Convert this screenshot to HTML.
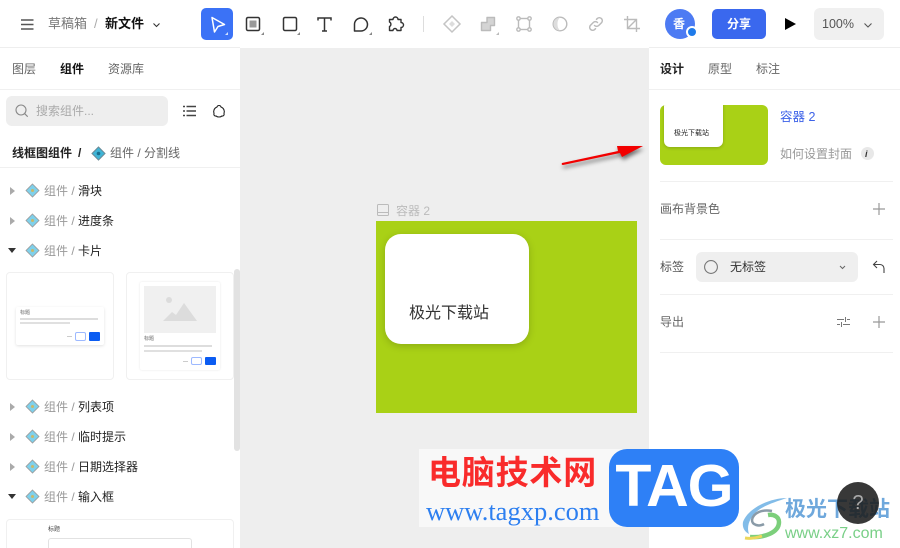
<!DOCTYPE html>
<html lang="zh"><head><meta charset="utf-8"><style>
html,body{margin:0;padding:0;background:#fff}
#p{position:relative;width:900px;height:548px;overflow:hidden;background:#fff;font-family:"Liberation Sans","Noto Sans CJK SC",sans-serif;color:#333}
#p div,#p span.a,#p svg{position:absolute}
.t{position:absolute;white-space:nowrap;line-height:16px}
.tree{font-size:12px;color:#999;left:44px}
.tree b{font-weight:400;color:#222}
.line{height:1px;background:#f0f0f0}
svg{overflow:visible}
</style></head><body><div id="p">
<!-- canvas -->
<div style="left:240px;top:48px;width:409px;height:500px;background:#eee"></div>
<div class="line" style="left:0;top:47px;width:240px;background:#eee"></div>
<div class="line" style="left:649px;top:47px;width:251px;background:#eee"></div>
<!-- top bar -->
<svg style="left:21px;top:18.500px" width="13" height="11" fill="none" stroke="#555" stroke-width="1.600"><path d="M0 1h12.500M0 5.500h12.500M0 10h12.500"/></svg>
<div class="t" style="left:48px;top:16px;font-size:13px;color:#777">草稿箱</div>
<div class="t" style="left:94px;top:16px;font-size:13px;color:#aaa">/</div>
<div class="t" style="left:105px;top:16px;font-size:13px;font-weight:700;color:#111">新文件</div>
<svg style="left:153px;top:23px" width="7" height="5" fill="none" stroke="#333" stroke-width="1.100"><path d="M.5 .5l3 3 3-3"/></svg>
<div style="left:201px;top:8px;width:32px;height:32px;border-radius:5px;background:#3b72f6"></div>
<svg style="left:201px;top:8px" width="32" height="32" fill="none"><path d="M11 9.500L23.500 16.500 17 18.500 13.500 24Z" stroke="#fff" stroke-width="1.500" stroke-linejoin="round"/><path d="M27 24v3h-3z" fill="#cfe0ff"/></svg>
<svg style="left:245px;top:16px" width="20" height="20" fill="none"><rect x="1.500" y="1.500" width="13" height="13" rx="1.500" stroke="#333" stroke-width="1.500"/><rect x="4.500" y="4.500" width="7" height="7" fill="#999"/><path d="M19 16v3h-3z" fill="#888"/></svg>
<svg style="left:281px;top:16px" width="20" height="20" fill="none"><rect x="2.500" y="1.500" width="13" height="13" rx="1.500" stroke="#333" stroke-width="1.500"/><path d="M19 16v3h-3z" fill="#888"/></svg>
<svg style="left:317px;top:17px" width="16" height="15" fill="none" stroke="#333" stroke-width="1.500"><path d="M1 3.500V1h13v2.500M7.500 1v13M5 14h5"/></svg>
<svg style="left:353px;top:16px" width="20" height="20" fill="none"><path d="M1.500 15V8a6.500 6.500 0 1 1 6.500 7Z" stroke="#333" stroke-width="1.500" stroke-linejoin="round"/><path d="M19 16v3h-3z" fill="#888"/></svg>
<svg style="left:388px;top:16px" width="16" height="16" fill="none"><path d="M5 3.500a2.500 2.500 0 0 1 5 0H13v3a2.500 2.500 0 0 1 0 5V14.500H9a2 2 0 0 0-4 0H1.500V10.500a2.500 2.500 0 0 0 0-4.500V3.500Z" stroke="#333" stroke-width="1.400" stroke-linejoin="round"/></svg>
<div style="left:423px;top:16px;width:1px;height:16px;background:#ddd"></div>
<svg style="left:443px;top:15px" width="18" height="18" fill="none" stroke="#c4c4c4" stroke-width="1.500"><path d="M9 1l8 8-8 8-8-8z"/><path d="M9 6l3 3-3 3-3-3z" fill="#ddd" stroke="none"/></svg>
<svg style="left:480px;top:16px" width="20" height="20" fill="#d4d4d4" stroke="#bbb" stroke-width="1.400"><path d="M7 1.500h7.500v8h-4v5H1.500V6.500H7z" stroke-linejoin="round"/><path d="M19 16v3h-3z" fill="#bbb" stroke="none"/></svg>
<svg style="left:516px;top:16px" width="16" height="16" fill="none" stroke="#bbb" stroke-width="1.400"><rect x="2.500" y="2.500" width="11" height="11"/><circle cx="2.500" cy="2.500" r="1.700" fill="#fff"/><circle cx="13.500" cy="2.500" r="1.700" fill="#fff"/><circle cx="2.500" cy="13.500" r="1.700" fill="#fff"/><circle cx="13.500" cy="13.500" r="1.700" fill="#fff"/></svg>
<svg style="left:552px;top:16px" width="16" height="16" fill="none" stroke="#bbb" stroke-width="1.400"><circle cx="8" cy="8" r="6.800"/><path d="M8 1.500a6.500 6.500 0 0 0 0 13c-2-2-2.500-4-2.500-6.500S6 3.500 8 1.500z" fill="#ddd" stroke="none"/></svg>
<svg style="left:588px;top:16px" width="16" height="16" fill="none" stroke="#bbb" stroke-width="1.500" stroke-linecap="round"><path d="M6.500 9.500a3 3 0 0 0 4.200 0l3-3a3 3 0 0 0-4.200-4.200l-1 1"/><path d="M9.500 6.500a3 3 0 0 0-4.200 0l-3 3a3 3 0 0 0 4.200 4.200l1-1"/></svg>
<svg style="left:624px;top:16px" width="16" height="16" fill="none" stroke="#bbb" stroke-width="1.400"><path d="M3.500 0v12.500H16M0 3.500h12.500V16M3.500 12.500l9-9"/></svg>
<div style="left:665px;top:9px;width:30px;height:30px;border-radius:50%;background:#4d7bf3"></div>
<div class="t" style="left:673px;top:16px;font-size:12px;font-weight:700;color:#fff">香</div>
<div style="left:686px;top:26px;width:8px;height:8px;border-radius:50%;background:#1f7bea;border:2px solid #fff"></div>
<div style="left:712px;top:9px;width:54px;height:30px;border-radius:5px;background:#3a68ee"></div>
<div class="t" style="left:727px;top:16px;font-size:12px;font-weight:700;color:#fff">分享</div>
<svg style="left:785px;top:18px" width="11" height="12"><path d="M0 0l11 6-11 6z" fill="#000"/></svg>
<div style="left:814px;top:8px;width:70px;height:32px;border-radius:6px;background:#f0f0f0"></div>
<div class="t" style="left:822px;top:16px;font-size:12.500px;color:#555">100%</div>
<svg style="left:864px;top:23px" width="8" height="5" fill="none" stroke="#555" stroke-width="1.100"><path d="M.5 .5l3.500 3.500 3.500-3.500"/></svg>
<!-- left panel -->
<div class="t" style="left:12px;top:61px;font-size:12px;color:#666">图层</div>
<div class="t" style="left:60px;top:61px;font-size:12px;font-weight:700;color:#111">组件</div>
<div class="t" style="left:108px;top:61px;font-size:12px;color:#666">资源库</div>
<div class="line" style="left:0;top:89px;width:240px"></div>
<div style="left:6px;top:96px;width:162px;height:30px;border-radius:6px;background:#eee"></div>
<svg style="left:15px;top:104px" width="14" height="14" fill="none" stroke="#888" stroke-width="1.100"><circle cx="6" cy="6" r="5"/><path d="M9.700 9.700l3 3"/></svg>
<div class="t" style="left:36px;top:103px;font-size:12px;color:#aaa">搜索组件...</div>
<svg style="left:183px;top:105px" width="13" height="12" stroke="#444" stroke-width="1.500"><path d="M3.500 1.500H13M3.500 6H13M3.500 10.500H13M0 1.500h2M0 6h2M0 10.500h2"/></svg>
<svg style="left:212px;top:104px" width="14" height="15" fill="none" stroke="#222" stroke-width="1.100"><path d="M7 1.500a2 2 0 0 1 2 1.500a5 5 0 0 1 3 6.500a1.800 1.800 0 0 1-2 2.500a5 5 0 0 1-6 0a1.800 1.800 0 0 1-2-2.500a5 5 0 0 1 3-6.500a2 2 0 0 1 2-1.500z"/></svg>
<div class="t" style="left:12px;top:145px;font-size:12px;font-weight:700;color:#222">线框图组件</div>
<div class="t" style="left:78px;top:145px;font-size:12px;font-weight:700;color:#222">/</div>
<svg style="left:91.500px;top:146.500px" width="13" height="13"><path d="M6.500 0l6.500 6.500-6.500 6.500L0 6.500z" fill="#3fb4d6" stroke="#6a8a96"/><circle cx="6.500" cy="6.500" r="1.800" fill="#1a6f8e"/></svg>
<div class="t" style="left:110px;top:145px;font-size:12px;color:#666">组件 / 分割线</div>
<div class="line" style="left:0;top:167px;width:240px"></div>

<svg style="left:9px;top:187px" width="6" height="8"><path d="M1 0l5 4-5 4z" fill="#aaa"/></svg>
<svg style="left:26px;top:184px" width="13" height="13"><path d="M6.500 0l6.500 6.500-6.500 6.500L0 6.500z" fill="#7fd0ea" stroke="#999" stroke-width=".8"/><circle cx="6.500" cy="6.500" r="1.500" fill="#c9b76a"/></svg>
<div class="t tree" style="top:183px">组件 / <b>滑块</b></div>
<svg style="left:9px;top:217px" width="6" height="8"><path d="M1 0l5 4-5 4z" fill="#aaa"/></svg>
<svg style="left:26px;top:214px" width="13" height="13"><path d="M6.500 0l6.500 6.500-6.500 6.500L0 6.500z" fill="#7fd0ea" stroke="#999" stroke-width=".8"/><circle cx="6.500" cy="6.500" r="1.500" fill="#c9b76a"/></svg>
<div class="t tree" style="top:213px">组件 / <b>进度条</b></div>
<svg style="left:8px;top:248px" width="8" height="6"><path d="M0 0h8L4 5z" fill="#333"/></svg>
<svg style="left:26px;top:244px" width="13" height="13"><path d="M6.500 0l6.500 6.500-6.500 6.500L0 6.500z" fill="#7fd0ea" stroke="#999" stroke-width=".8"/><circle cx="6.500" cy="6.500" r="1.500" fill="#c9b76a"/></svg>
<div class="t tree" style="top:243px">组件 / <b>卡片</b></div>

<!-- thumb 1 -->
<div style="left:6px;top:272px;width:106px;height:106px;border:1px solid #f0f0f0;border-radius:4px"></div>
<div style="left:16px;top:307px;width:88px;height:38px;border-radius:2px;background:#fff;box-shadow:0 1px 3px rgba(0,0,0,.12)"></div>
<div class="t" style="left:20px;top:310px;font-size:5px;line-height:6px;color:#666">标题</div>
<div style="left:20px;top:318px;width:78px;height:1.500px;background:#ddd"></div>
<div style="left:20px;top:322px;width:50px;height:1.500px;background:#e0e0e0"></div>
<div style="left:67px;top:336px;width:5px;height:1px;background:#ccc"></div>
<div style="left:75px;top:332px;width:9px;height:7px;border:1px solid #9db9ff;border-radius:2px"></div>
<div style="left:89px;top:332px;width:11px;height:9px;border-radius:1px;background:#0b5cf2"></div>
<!-- thumb 2 -->
<div style="left:126px;top:272px;width:106px;height:106px;border:1px solid #f0f0f0;border-radius:4px"></div>
<div style="left:140px;top:282px;width:80px;height:88px;border-radius:2px;background:#fff;box-shadow:0 0 2px rgba(0,0,0,.1)"></div>
<div style="left:144px;top:286px;width:72px;height:47px;background:#f0f0f0"></div>
<svg style="left:160px;top:296px" width="38" height="26"><circle cx="9" cy="4" r="3" fill="#dcdcdc"/><path d="M3 25L12 16L16 19L24 7L37 25z" fill="#dcdcdc"/></svg>
<div class="t" style="left:144px;top:336px;font-size:5px;line-height:6px;color:#666">标题</div>
<div style="left:144px;top:345px;width:68px;height:1.500px;background:#ddd"></div>
<div style="left:144px;top:350px;width:58px;height:1.500px;background:#e0e0e0"></div>
<div style="left:183px;top:361px;width:5px;height:1px;background:#ccc"></div>
<div style="left:191px;top:357px;width:9px;height:6px;border:1px solid #9db9ff;border-radius:2px"></div>
<div style="left:205px;top:357px;width:11px;height:8px;border-radius:1px;background:#0b5cf2"></div>
<!-- scrollbar -->
<div style="left:234px;top:269px;width:6px;height:182px;border-radius:3px;background:#e2e2e2"></div>

<svg style="left:9px;top:403px" width="6" height="8"><path d="M1 0l5 4-5 4z" fill="#aaa"/></svg>
<svg style="left:26px;top:400px" width="13" height="13"><path d="M6.500 0l6.500 6.500-6.500 6.500L0 6.500z" fill="#7fd0ea" stroke="#999" stroke-width=".8"/><circle cx="6.500" cy="6.500" r="1.500" fill="#c9b76a"/></svg>
<div class="t tree" style="top:399px">组件 / <b>列表项</b></div>
<svg style="left:9px;top:433px" width="6" height="8"><path d="M1 0l5 4-5 4z" fill="#aaa"/></svg>
<svg style="left:26px;top:430px" width="13" height="13"><path d="M6.500 0l6.500 6.500-6.500 6.500L0 6.500z" fill="#7fd0ea" stroke="#999" stroke-width=".8"/><circle cx="6.500" cy="6.500" r="1.500" fill="#c9b76a"/></svg>
<div class="t tree" style="top:429px">组件 / <b>临时提示</b></div>
<svg style="left:9px;top:463px" width="6" height="8"><path d="M1 0l5 4-5 4z" fill="#aaa"/></svg>
<svg style="left:26px;top:460px" width="13" height="13"><path d="M6.500 0l6.500 6.500-6.500 6.500L0 6.500z" fill="#7fd0ea" stroke="#999" stroke-width=".8"/><circle cx="6.500" cy="6.500" r="1.500" fill="#c9b76a"/></svg>
<div class="t tree" style="top:459px">组件 / <b>日期选择器</b></div>
<svg style="left:8px;top:494px" width="8" height="6"><path d="M0 0h8L4 5z" fill="#333"/></svg>
<svg style="left:26px;top:490px" width="13" height="13"><path d="M6.500 0l6.500 6.500-6.500 6.500L0 6.500z" fill="#7fd0ea" stroke="#999" stroke-width=".8"/><circle cx="6.500" cy="6.500" r="1.500" fill="#c9b76a"/></svg>
<div class="t tree" style="top:489px">组件 / <b>输入框</b></div>
<div style="left:6px;top:519px;width:226px;height:40px;border:1px solid #f0f0f0;border-radius:4px"></div>
<div class="t" style="left:48px;top:526px;font-size:6px;line-height:8px;color:#444">标题</div>
<div style="left:48px;top:538px;width:142px;height:20px;border:1px solid #e2e2e2;border-radius:3px"></div>

<!-- canvas content -->
<svg style="left:377px;top:204px" width="12" height="12" fill="none" stroke="#bbb"><rect x=".5" y=".5" width="11" height="11" rx="1"/><path d="M.5 8.500h11"/></svg>
<div class="t" style="left:396px;top:203px;font-size:12px;color:#bbb">容器 2</div>
<div style="left:376px;top:221px;width:261px;height:192px;background:#a9d116"></div>
<div style="left:385px;top:234px;width:144px;height:110px;border-radius:16px;background:#fff;box-shadow:0 2px 8px rgba(0,0,0,.18)"></div>
<div class="t" style="left:409px;top:304px;font-size:16px;line-height:20px;color:#333">极光下载站</div>
<!-- arrow -->
<svg style="left:560px;top:142px;filter:drop-shadow(1px 3px 2px rgba(0,0,0,.55))" width="86" height="24"><path d="M2 21L58 9 57 4 83 4 62 15 60 11 3 23Q1 23 2 21z" fill="#f20000"/></svg>

<!-- right panel -->
<div class="t" style="left:660px;top:61px;font-size:12px;font-weight:700;color:#222">设计</div>
<div class="t" style="left:708px;top:61px;font-size:12px;color:#666">原型</div>
<div class="t" style="left:756px;top:61px;font-size:12px;color:#666">标注</div>
<div class="line" style="left:649px;top:89px;width:251px"></div>
<div style="left:660px;top:105px;width:108px;height:60px;border-radius:6px;background:#a9d116;overflow:hidden"><div style="left:4px;top:-6px;width:59px;height:48px;border-radius:6px;background:#fff;box-shadow:0 1px 3px rgba(0,0,0,.2)"></div><div class="t" style="left:14px;top:24px;font-size:7px;line-height:9px;color:#222">极光下载站</div></div>
<div class="t" style="left:780px;top:109px;font-size:12.500px;color:#3d62e8">容器 2</div>
<div class="t" style="left:780px;top:146px;font-size:12px;color:#999">如何设置封面</div>
<div style="left:861px;top:147px;width:13px;height:13px;border-radius:50%;background:#e8e8e8"></div>
<div class="t" style="left:865px;top:146px;font-size:9px;font-weight:700;font-style:italic;color:#333">i</div>
<div class="line" style="left:660px;top:181px;width:233px"></div>
<div class="t" style="left:660px;top:201px;font-size:12px;color:#666">画布背景色</div>
<svg style="left:873px;top:203px" width="12" height="12" stroke="#999" stroke-width="1.200"><path d="M6 0v12M0 6h12"/></svg>
<div class="line" style="left:660px;top:239px;width:233px"></div>
<div class="t" style="left:660px;top:259px;font-size:12px;color:#555">标签</div>
<div style="left:696px;top:252px;width:162px;height:30px;border-radius:6px;background:#efefef"></div>
<svg style="left:704px;top:260px" width="14" height="14" fill="none" stroke="#777" stroke-width="1.100"><circle cx="7" cy="7" r="6.400"/></svg>
<div class="t" style="left:730px;top:259px;font-size:12px;color:#333">无标签</div>
<svg style="left:839px;top:265px" width="7" height="5" fill="none" stroke="#666"><path d="M1 1l2.500 2.500L6 1"/></svg>
<svg style="left:872px;top:260px" width="14" height="14" fill="none" stroke="#444" stroke-width="1.100"><path d="M5 1L1.500 4.500 5 8M1.500 4.500H8a4 4 0 0 1 4 4V13"/></svg>
<div class="line" style="left:660px;top:294px;width:233px"></div>
<div class="t" style="left:660px;top:314px;font-size:12px;color:#666">导出</div>
<svg style="left:837px;top:316px" width="13" height="12" stroke="#777"><path d="M0 3.500h7M10 3.500h3M8.500 1v5M0 8.500h3M6 8.500h7M4.500 6v5"/></svg>
<svg style="left:873px;top:316px" width="12" height="12" stroke="#999" stroke-width="1.200"><path d="M6 0v12M0 6h12"/></svg>
<div class="line" style="left:660px;top:352px;width:233px"></div>

<!-- watermark -->
<div style="left:419px;top:449px;width:220px;height:78px;background:#f8f8f8"></div>
<div class="t" style="left:428px;top:454px;font-size:33px;line-height:38px;font-weight:700;letter-spacing:.8px;color:#f92b2b">电脑技术网</div>
<div class="t" style="left:426px;top:496px;font-size:26.500px;line-height:30px;font-family:'Liberation Serif',serif;color:#2d7ff0">www.tagxp.com</div>
<div style="left:609px;top:449px;width:130px;height:78px;border-radius:18px;background:#2e80f6"></div>
<div class="t" style="left:609px;top:450px;width:130px;text-align:center;font-size:59px;line-height:72px;font-weight:700;color:#fff;letter-spacing:-1px">TAG</div>
<svg style="left:740px;top:496px" width="54" height="46" fill="none"><path d="M47 2C30 2 8 12 3 26C2 32 5 36 9 38C6 30 10 20 20 13C28 8 38 5 47 2Z" fill="#82bce8"/><path d="M32 15c-10-2-19 2-20 9 0 5 7 7 12 4" stroke="#8a9ba8" stroke-width="2.500"/><path d="M10 41c13 1 29-4 29-15 0-5-5-8-11-7" stroke="#7ccf7b" stroke-width="4.500"/><path d="M5 42c6 1 11 0 17-2" stroke="#ecd75c" stroke-width="3"/></svg>
<div class="t" style="left:785px;top:496px;font-size:21px;line-height:28px;font-weight:700;color:#6fa8dc">极光下载站</div>
<div class="t" style="left:785px;top:524px;font-size:16px;line-height:20px;color:#79cf87">www.xz7.com</div>
<!-- help button -->
<div style="left:837px;top:482px;width:42px;height:42px;border-radius:50%;background:rgba(28,28,28,.88)"></div>
<div class="t" style="left:837px;top:491px;width:42px;text-align:center;font-size:20px;line-height:24px;color:#aaa">?</div>
</div></body></html>
